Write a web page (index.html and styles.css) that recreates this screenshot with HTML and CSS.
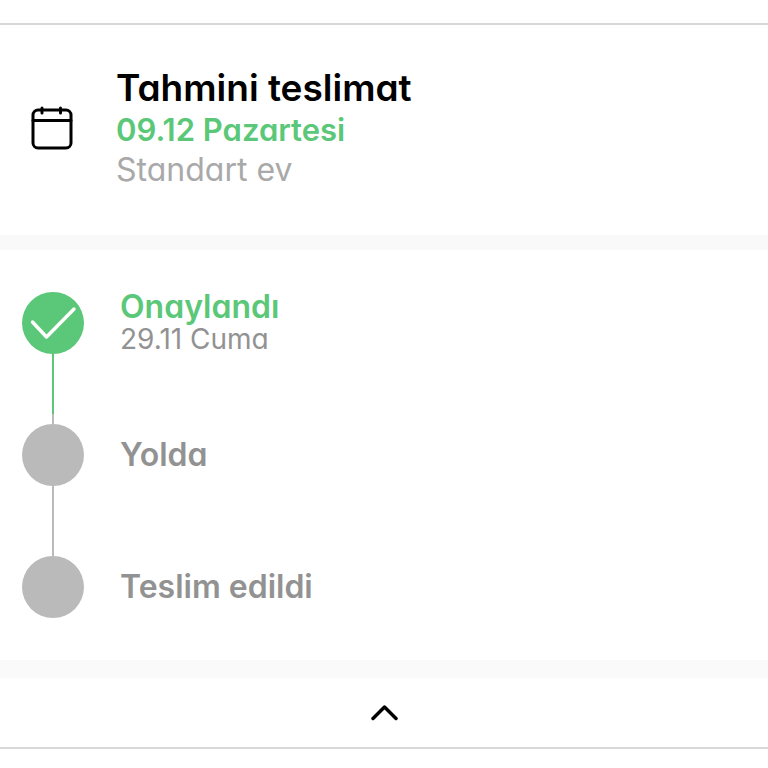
FILE: index.html
```html
<!DOCTYPE html>
<html lang="tr">

<head>
    <meta charset="UTF-8" />
    <meta name="viewport" content="width=device-width, initial-scale=1.0" />
    <title>Tahmini teslimat</title>
    <link rel="stylesheet" href="styles.css">
</head>

<body>

    <main class="delivery">
        <header class="summary">
            <svg class="calendar" viewBox="0 0 42 44" fill="none" stroke="#000" stroke-width="3" stroke-linecap="round" aria-hidden="true">
                <rect x="2" y="4" width="38" height="38" rx="5" />
                <path d="M2 14.500H40M11 2V7M29.500 2V7" />
            </svg>
            <div class="summary-text">
                <h1>Tahmini teslimat</h1>
                <p class="date">09.12 Pazartesi</p>
                <p class="type">Standart ev</p>
            </div>
        </header>

        <ol class="steps">
            <li class="step done">
                <div class="track">
                    <span class="dot">
                        <svg viewBox="0 0 62 62" fill="none" stroke="#fff" stroke-width="3.500" stroke-linecap="round" stroke-linejoin="round" aria-hidden="true">
                            <path d="M10.500 30L24.500 45L52 17" />
                        </svg>
                    </span>
                    <span class="line"></span>
                </div>
                <div class="step-text">
                    <h2>Onaylandı</h2>
                    <p>29.11 Cuma</p>
                </div>
            </li>
            <li class="step">
                <div class="track">
                    <span class="dot"></span>
                    <span class="line"></span>
                </div>
                <div class="step-text">
                    <h2>Yolda</h2>
                </div>
            </li>
            <li class="step">
                <div class="track">
                    <span class="dot"></span>
                </div>
                <div class="step-text">
                    <h2>Teslim edildi</h2>
                </div>
            </li>
        </ol>

        <button type="button" class="toggle" aria-label="Gizle">
            <svg viewBox="0 0 28 18" fill="none" stroke="#000" stroke-width="3.500" stroke-linecap="round" stroke-linejoin="round" aria-hidden="true">
                <path d="M3 14.500L14.500 3L26 14.500" />
            </svg>
        </button>
    </main>

</body>

</html>
```

FILE: styles.css
```css
body {
    margin: 0;
    background: #fff;
    font-family: Inter, "Liberation Sans", sans-serif;
    /* single-storey a */
    font-feature-settings: "cv11";
}

h1,
h2,
p {
    margin: 0;
}

.delivery {
    margin-top: 23px;
    border-top: 2px solid #d8d8d8;
    border-bottom: 2px solid #d8d8d8;
}

.summary {
    display: flex;
    align-items: center;
    gap: 43px;
    padding: 41px 31px 45px;
    border-bottom: 15px solid #f9f9f9;
}

.calendar {
    flex: none;
    width: 42px;
    height: 44px;
}

.summary-text {
    font-size: 32px;
    line-height: 40px;
}

h1 {
    font-size: 37px;
    font-weight: 600;
    line-height: 44px;
}

.date {
    color: #5bc778;
    font-size: 31px;
    font-weight: 600;
}

.type {
    color: #a9a9a9;
}

.steps {
    list-style: none;
    margin: 0;
    padding: 42px 22px;
    border-bottom: 18px solid #fafafa;
}

.step {
    display: flex;
    gap: 36px;
    color: #929292;
}

.track {
    display: flex;
    flex-direction: column;
    align-items: center;
}

.dot {
    width: 62px;
    height: 62px;
    border-radius: 50%;
    background: #bababa;
}

.dot svg {
    display: block;
}

.line {
    width: 2px;
    height: 70px;
    background: #bababa;
}

.step-text {
    display: flex;
    flex-direction: column;
    justify-content: center;
    height: 62px;
    line-height: 32px;
}

h2 {
    font-size: 32px;
    font-weight: 600;
}

.step-text p {
    font-size: 28px;
}

.done .dot {
    background: #5bc778;
}

.done .line {
    background: linear-gradient(#5bc778 60px, #bababa 60px);
}

.done h2 {
    color: #5bc778;
}

.toggle {
    display: flex;
    align-items: center;
    justify-content: center;
    width: 100%;
    height: 69px;
    padding: 0;
    border: none;
    background: #fff;
    cursor: pointer;
}

.toggle svg {
    width: 28px;
    height: 18px;
}
```
